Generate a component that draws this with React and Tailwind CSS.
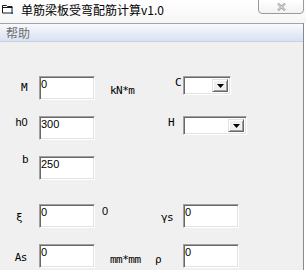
import React from 'react'

const sunken =
  'border border-t-[#a0a0a0] border-l-[#a0a0a0] border-b-white border-r-white shadow-[inset_1px_1px_0_#696969,inset_-1px_-1px_0_#e3e3e3] bg-white'

const labelFont = { fontFamily: '"DejaVu Sans Mono", "Liberation Mono", monospace' }
const textFont = { fontFamily: '"Liberation Sans", Arial, sans-serif' }

function TextBox({ value, width = 'w-[56px]' }) {
  return (
    <div className={`${sunken} ${width} h-[24px] shrink-0 pl-[1px] pt-[1px] text-[11px] leading-[12px] text-black`} style={textFont}>
      {value}
    </div>
  )
}

function Combo({ width }) {
  return (
    <div className={`${sunken} ${width} h-[19px] shrink-0 flex justify-end p-[2px]`}>
      <div className="w-[16px] h-full bg-[#f0f0f0] border border-t-[#e3e3e3] border-l-[#e3e3e3] border-b-[#696969] border-r-[#696969] shadow-[inset_1px_1px_0_#fff,inset_-1px_-1px_0_#a0a0a0] flex items-center justify-center">
        <svg width="7" height="4" viewBox="0 0 7 4">
          <path d="M0 0h7L3.5 4z" fill="#000" />
        </svg>
      </div>
    </div>
  )
}

function Label({ children, className = '' }) {
  return (
    <span className={`text-[11px] leading-[12px] tracking-[-0.5px] text-black whitespace-nowrap ${className}`} style={labelFont}>
      {children}
    </span>
  )
}

function Row({ label, labelClass, children, mid, right, className = '' }) {
  return (
    <div className={`flex items-start h-[24px] ${className}`}>
      <div className="w-[39px] flex justify-end shrink-0">
        <Label className={labelClass}>{label}</Label>
      </div>
      {children}
      <div className="w-[88px] flex items-start shrink-0">
        {mid}
      </div>
      {right}
    </div>
  )
}

export default function App() {
  return (
    <div className="w-[306px] h-[270px] bg-white overflow-hidden flex flex-col">
      {/* 标题栏 */}
      <div className="h-[23px] flex items-start bg-gradient-to-b from-white to-[#f6f6f6] shrink-0">
        <svg className="mt-[4px] ml-[2px]" width="11" height="10" viewBox="0 0 11 10">
          <path d="M0.5 1.5h4l1 1h4.5v6.5h-9.5z" fill="#fff" stroke="#1a1a1a" />
          <path d="M0.5 3.5h10" stroke="#1a1a1a" />
          <rect x="9" y="8" width="2" height="2" fill="#2a5bd8" />
        </svg>
        <span className="ml-[8px] mt-[2px] text-[12px] leading-[15px] text-black whitespace-nowrap" style={{ fontFamily: '"Noto Sans CJK SC", "Liberation Sans", sans-serif' }}>
          单筋梁板受弯配筋计算v1.0
        </span>
        <div className="ml-auto mr-[2px] -mt-[1px] w-[46px] h-[15px] border border-[#9a9a9a] rounded-b-[4px] bg-gradient-to-b from-white to-[#f2f2f2] flex items-center justify-center">
          <svg width="9" height="8" viewBox="0 0 9 8">
            <path d="M1 0.5l3.5 3.5M8 0.5l-3.5 3.5M1 7.5l3.5-3.5M8 7.5l-3.5-3.5" stroke="#9a9a9a" strokeWidth="2.2" />
            <path d="M1 0.5l3.5 3.5M8 0.5l-3.5 3.5M1 7.5l3.5-3.5M8 7.5l-3.5-3.5" stroke="#fff" strokeWidth="0.8" />
          </svg>
        </div>
      </div>

      <div className="flex-1 flex">
        <div className="w-[304px] border-r border-[#8a8a8a] bg-[#f0f0f0] flex flex-col">
          {/* 菜单栏 */}
          <div className="h-[19px] border-t border-b border-t-[#a0a4ab] border-b-[#c8d1e2] bg-gradient-to-b from-[#f7f9fc] to-[#d9e1f2] flex items-center px-[6px]">
            <span className="text-[12px] leading-[14px] text-[#6d6d6d]" style={{ fontFamily: '"Noto Sans CJK SC", sans-serif' }}>
              帮助
            </span>
          </div>

          <div className="flex flex-col pt-[34px]">
            <Row
              label="M"
              labelClass="mt-[6px] mr-[12px]"
              mid={<Label className="ml-[15px] mt-[9px]">kN*m</Label>}
              right={
                <div className="flex items-start -ml-[8px]">
                  <Label className="mt-[1px] w-[8px]">C</Label>
                  <Combo width="w-[48px]" />
                </div>
              }
            >
              <TextBox value="0" />
            </Row>

            <Row
              label={<>h<span style={textFont}>0</span></>}
              labelClass="mt-[0px] mr-[12px]"
              className="mt-[16px]"
              right={
                <div className="flex items-start -ml-[15px]">
                  <Label className="mt-[1px] w-[15px]">H</Label>
                  <Combo width="w-[64px]" />
                </div>
              }
            >
              <TextBox value="300" />
            </Row>

            <Row label="b" labelClass="-mt-[2px] mr-[11px]" className="mt-[16px]">
              <TextBox value="250" />
            </Row>

            <Row
              label="ξ"
              labelClass="mt-[8px] mr-[17px]"
              className="mt-[24px]"
              mid={
                <span className="ml-[7px] mt-[1px] text-[11px] leading-[12px] text-black" style={textFont}>
                  0
                </span>
              }
              right={
                <div className="flex items-start -ml-[22px]">
                  <Label className="mt-[8px] w-[22px]">γs</Label>
                  <TextBox value="0" />
                </div>
              }
            >
              <TextBox value="0" />
            </Row>

            <Row
              label="As"
              labelClass="mt-[8px] mr-[12px]"
              className="mt-[16px]"
              mid={<Label className="ml-[15px] mt-[10px]">mm*mm</Label>}
              right={
                <div className="flex items-start -ml-[28px]">
                  <Label className="mt-[10px] w-[28px]">ρ</Label>
                  <TextBox value="0" />
                </div>
              }
            >
              <TextBox value="0" />
            </Row>
          </div>
        </div>
      </div>
    </div>
  )
}
